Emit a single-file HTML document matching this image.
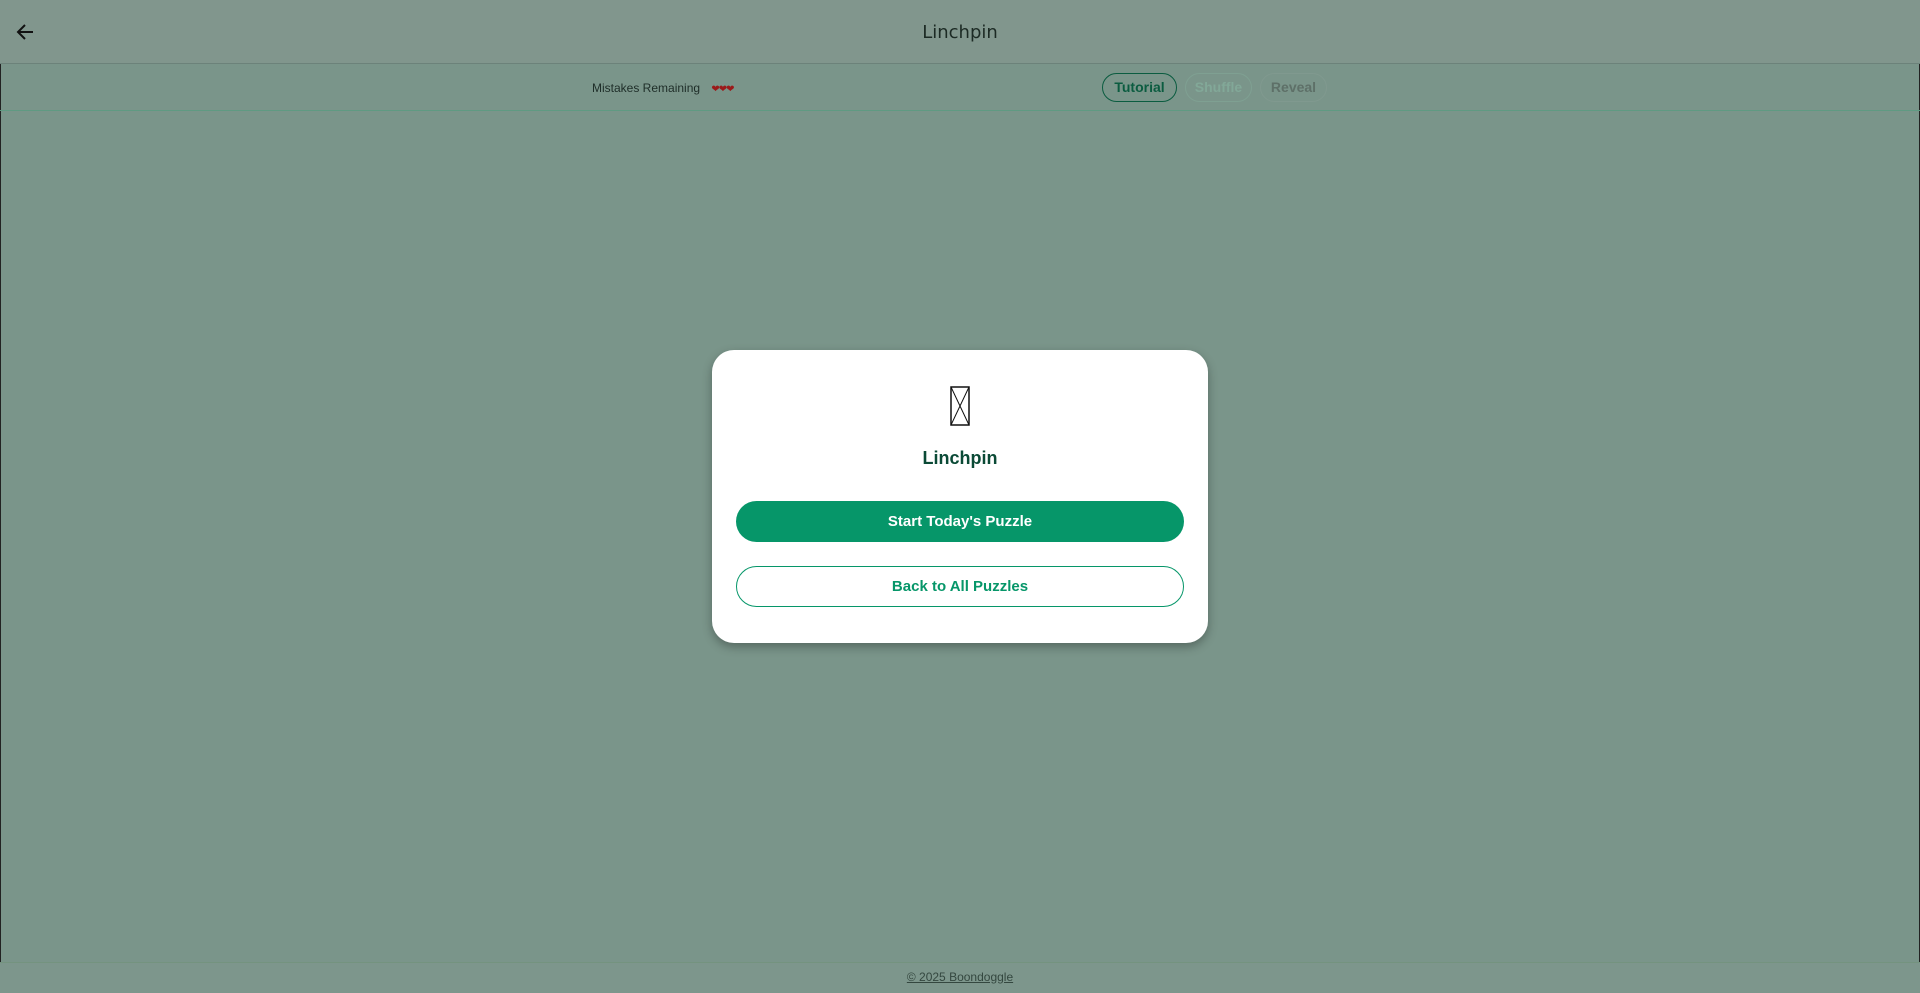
<!DOCTYPE html>
<html><head><style>
*{box-sizing:border-box;margin:0;padding:0}
html,body{width:1920px;height:993px;overflow:hidden}
body{background:#7a958a;font-family:"Liberation Sans",sans-serif;position:relative;border:1px solid #222}
.hdr{position:absolute;left:-1px;top:-1px;width:1920px;height:64px;background:#81968d;border-bottom:1px solid #6c827a}
.hdr .t{position:absolute;left:0;right:0;top:22px;text-align:center;font-family:"DejaVu Sans",sans-serif;font-size:18px;color:#1c2a24}
.bar{position:absolute;left:-1px;top:63px;width:1920px;height:47px;border-bottom:1px solid #5f9a82}
.mist{position:absolute;left:592px;top:17px;font-size:12px;color:#1e2d28}
.mist span{color:#9b1a1a;font-size:10px;margin-left:8px;letter-spacing:-1px}
.pb{position:absolute;top:9px;height:29px;border-radius:15px;font-size:14px;font-weight:bold;text-align:center;line-height:27px}
.ftr{position:absolute;left:-1px;top:961px;width:1920px;height:32px;background:#7d968c;border-top:1px solid #74937f;text-align:center;font-size:12px;color:#34473f;line-height:28px}
.ftr span{text-decoration:underline}
.modal{position:absolute;left:711px;top:349px;width:496px;height:293px;background:#fff;border-radius:22px;box-shadow:0 4px 10px rgba(0,0,0,.3)}
.btn{position:absolute;left:24px;width:448px;height:41px;border-radius:21px;text-align:center;font-size:15px;font-weight:bold;line-height:41px}
</style></head><body>
<div class="hdr">
<svg style="position:absolute;left:15px;top:22px" width="20" height="20" viewBox="0 0 20 20"><path d="M18 10H3M10 3L3 10l7 7" stroke="#111" stroke-width="2" fill="none"/></svg>
<div class="t">Linchpin</div>
</div>
<div class="bar">
<div class="mist">Mistakes Remaining <span>❤❤❤</span></div>
<div class="pb" style="left:1102px;width:75px;border:1px solid #0b5c40;color:#0b5c40">Tutorial</div>
<div class="pb" style="left:1185px;width:67px;border:1px solid #7fa092;color:#82a898">Shuffle</div>
<div class="pb" style="left:1260px;width:67px;border:1px solid #80998f;color:#5e7068">Reveal</div>
</div>
<div class="modal">
<svg style="position:absolute;left:238px;top:36px" width="20" height="40" viewBox="0 0 20 40"><rect x="1" y="1" width="18" height="38" fill="none" stroke="#111" stroke-width="1.5"/><path d="M1 1L19 39M19 1L1 39" stroke="#111" stroke-width="1"/></svg>
<div style="position:absolute;left:0;right:0;top:98px;text-align:center;font-size:18px;font-weight:bold;color:#0b4a36">Linchpin</div>
<div class="btn" style="top:151px;background:#069669;color:#fff">Start Today's Puzzle</div>
<div class="btn" style="top:216px;border:1px solid #069669;color:#069669;line-height:39px">Back to All Puzzles</div>
</div>
<div class="ftr"><span>© 2025 Boondoggle</span></div>
</body></html>
